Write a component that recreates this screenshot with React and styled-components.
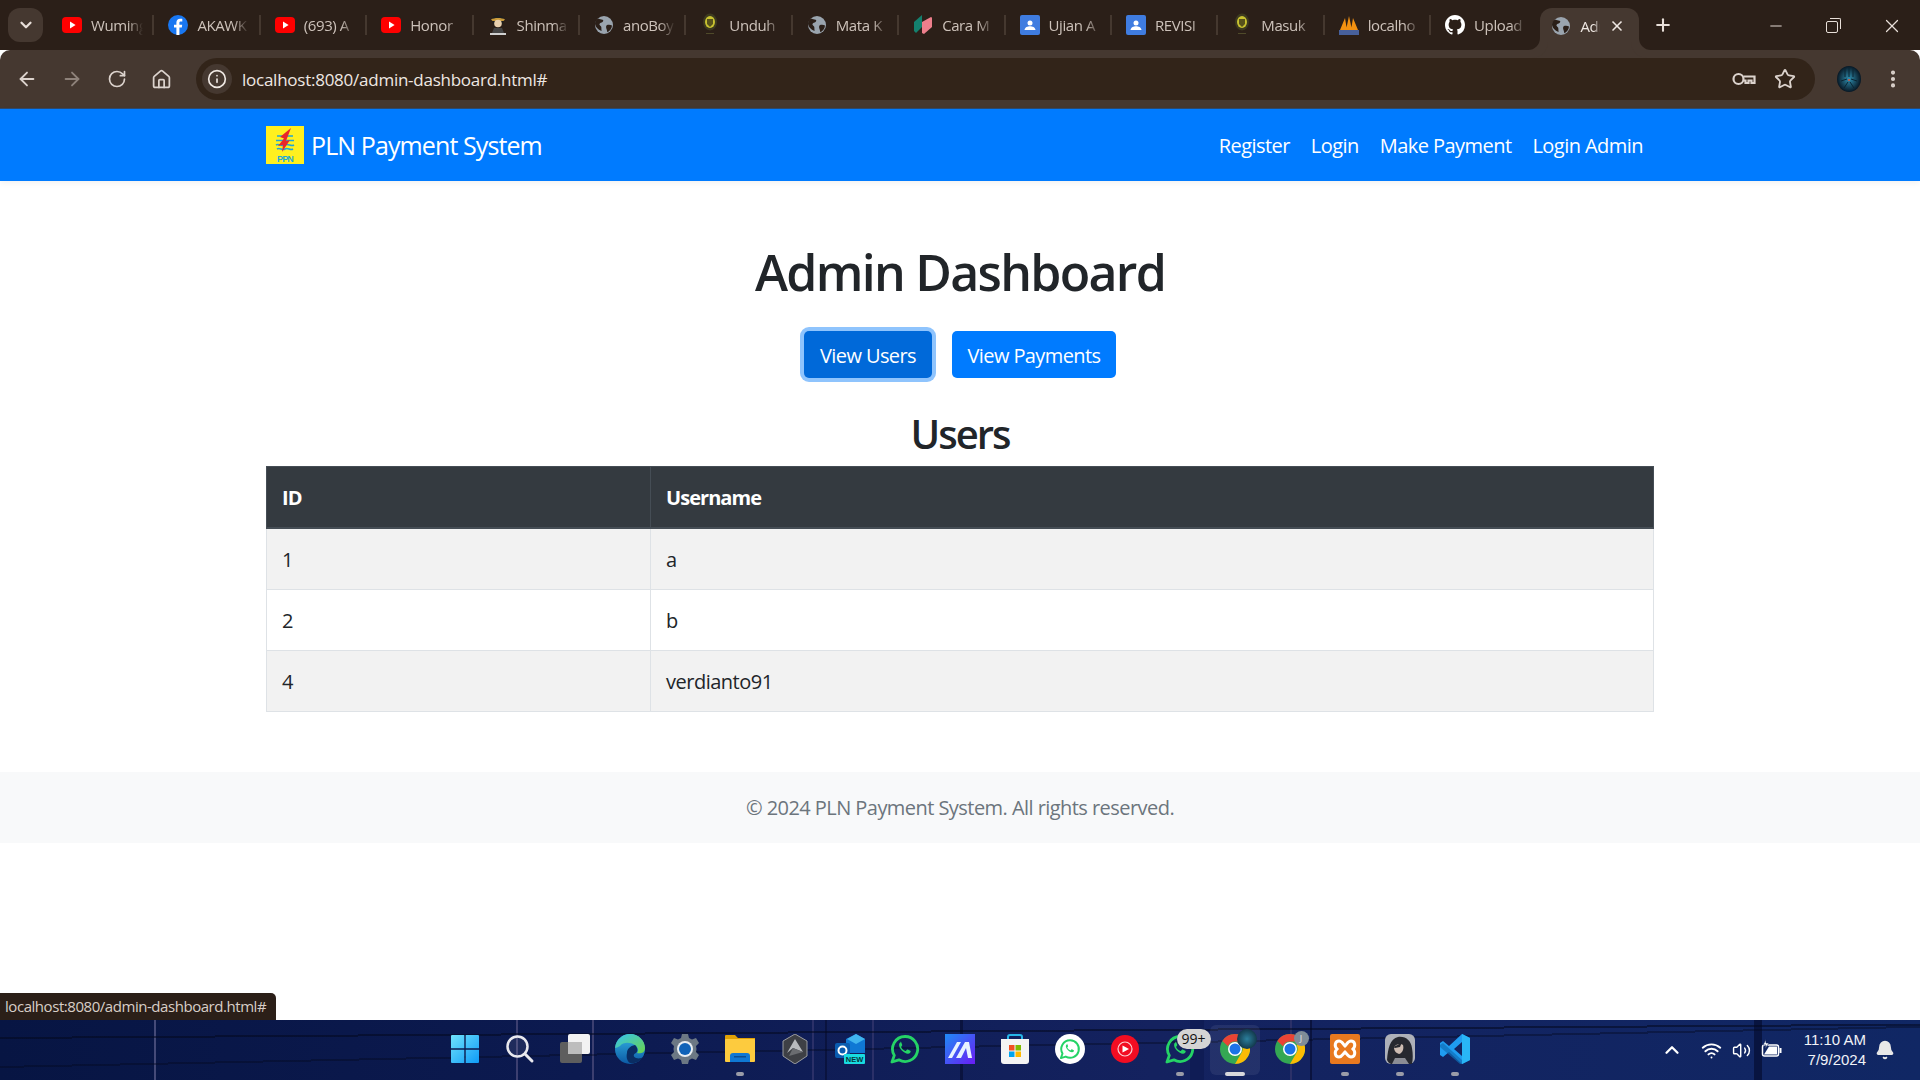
import React from "react";
import styled, { createGlobalStyle } from "styled-components";
import {
  ArrowLeft,
  ArrowRight,
  RotateCw,
  House,
  Info,
  Star,
  EllipsisVertical,
  ChevronDown,
  ChevronUp,
  X,
  Plus,
  Minus,
  Wifi,
  Volume2,
  Bell,
} from "lucide-react";

const GlobalStyle = createGlobalStyle`
  html, body {
    margin: 0;
    padding: 0;
    height: 100%;
    background: #fff;
    overflow: hidden;
  }
  * { box-sizing: border-box; }
`;

/* ---------- favicons ---------- */

const YouTubeIcon = () => (
  <svg width="20" height="20" viewBox="0 0 20 20">
    <rect y="2" width="20" height="16" rx="4" fill="#f00" />
    <path d="M8 6.6 13.6 10 8 13.4z" fill="#fff" />
  </svg>
);

const FacebookIcon = () => (
  <svg width="20" height="24" viewBox="0 0 20 24">
    <circle cx="10" cy="12" r="10" fill="#1877f2" />
    <path d="M8.4 22v-7.4H6v-2.9h2.4V9.6c0-2.5 1.5-3.8 3.7-3.8 1 0 1.9.1 2.2.1v2.6h-1.5c-1.2 0-1.4.6-1.4 1.4v1.8h2.8l-.4 2.9h-2.4V22z" fill="#fff" />
  </svg>
);

const GlobeIcon = () => (
  <svg width="20" height="20" viewBox="0 0 20 20">
    <circle cx="10" cy="10" r="9" fill="#9aa4ae" />
    <path d="M4 3.5c2 .5 3 1.200 4.500 1.200 1 0 1 1.500 0 2.300-1 .8-2.500.6-3 2-.4 1 1 1.600 1.600 2.600.5 1 .2 2.500.5 4.400-2.500-.8-6.600-4-6.600-7.500 0-2 1-3.600 3-5zM13 10c1.500-.5 3.500-.5 5 .5-.3 3-2 5.500-4.500 6.800-.7-1-.3-2-1-3.300-.6-1.400-.7-3.500.5-4z" fill="#2b1f18" />
  </svg>
);

const CharacterIcon = () => (
  <svg width="20" height="24" viewBox="0 0 20 24">
    <path d="M4 6c1-5 11-5 12 0l-1 5H5z" fill="#1e1e1e" />
    <path d="M3 6.500c3-2 11-2 14 0l-1.500 1.500h-11z" fill="#c99a3a" />
    <circle cx="10" cy="10.500" r="3.800" fill="#e8d0ae" />
    <path d="M6 15h8l2 5H4z" fill="#444" />
    <path d="M2 20h16v2H2z" fill="#cfcfcf" />
  </svg>
);

const EmblemIcon = () => (
  <svg width="18" height="24" viewBox="0 0 18 24">
    <ellipse cx="9" cy="9" rx="7" ry="8.500" fill="#3d3a20" />
    <ellipse cx="9" cy="9" rx="5" ry="6" fill="#c9c230" />
    <path d="M6 6h6v5l-3 3-3-3z" fill="#57521c" />
    <path d="M5 20h8v1H5z" fill="#4f4a2a" />
  </svg>
);

const CaraIcon = () => (
  <svg width="20" height="24" viewBox="0 0 20 24">
    <path d="M1 9 9 2v12l-6 6-2-2z" fill="#14806e" />
    <path d="M9 9l9-5c1 0 1 1 1 2v8l-8 7-2-1z" fill="#ee7f8c" />
  </svg>
);

const ClassroomIcon = () => (
  <svg width="20" height="20" viewBox="0 0 20 20">
    <rect width="20" height="20" rx="2" fill="#3f7ce0" />
    <circle cx="10" cy="8" r="2.500" fill="#fff" />
    <path d="M4.500 15c.5-3 3-3.800 5.500-3.800s5 .8 5.500 3.800z" fill="#fff" />
  </svg>
);

const PmaIcon = () => (
  <svg width="20" height="24" viewBox="0 0 20 24">
    <path d="M1 17 6 5l2 12zM7 17l3-14 3 14zM12 17l2-12 5 12z" fill="#f29111" />
    <rect x="0" y="17" width="20" height="5" fill="#47609c" />
  </svg>
);

const GithubIcon = () => (
  <svg width="20" height="20" viewBox="0 0 16 16">
    <path fill="#fff" d="M8 0C3.580 0 0 3.580 0 8c0 3.540 2.290 6.530 5.470 7.590.4.070.55-.17.55-.38 0-.19-.01-.82-.01-1.490-2.010.37-2.530-.49-2.690-.94-.09-.23-.48-.94-.82-1.130-.28-.15-.68-.52-.01-.53.63-.01 1.080.58 1.230.82.72 1.210 1.870.87 2.330.66.07-.52.28-.87.510-1.070-1.780-.2-3.640-.89-3.640-3.950 0-.87.31-1.590.82-2.150-.08-.2-.36-1.020.08-2.120 0 0 .67-.21 2.200.82.64-.18 1.320-.27 2-.27s1.360.09 2 .27c1.530-1.040 2.200-.82 2.200-.82.44 1.100.16 1.920.08 2.120.51.56.82 1.270.82 2.150 0 3.070-1.870 3.750-3.650 3.950.29.25.54.73.54 1.480 0 1.070-.01 1.930-.01 2.200 0 .21.15.46.55.38A8.010 8.010 0 0 0 16 8c0-4.420-3.580-8-8-8z" />
  </svg>
);

/* ---------- taskbar icons ---------- */

const WindowsIcon = () => (
  <svg width="30" height="30" viewBox="0 0 30 30">
    <defs>
      <linearGradient id="winGrad" x1="0" y1="0" x2="1" y2="1">
        <stop offset="0" stopColor="#6fe2fb" />
        <stop offset="1" stopColor="#0f9bf7" />
      </linearGradient>
    </defs>
    <path d="M1 2a1 1 0 0 1 1-1h12.300v13.300H1zM15.700 1H28a1 1 0 0 1 1 1v12.300H15.700zM1 15.700h13.300V29H2a1 1 0 0 1-1-1zM15.700 15.700H29V28a1 1 0 0 1-1 1H15.700z" fill="url(#winGrad)" />
  </svg>
);

const SearchIcon = () => (
  <svg width="30" height="30" viewBox="0 0 30 30">
    <circle cx="12.500" cy="12.500" r="10" fill="rgba(255,255,255,.08)" stroke="#e9e9ee" strokeWidth="2.500" />
    <path d="M20 20l7 7" stroke="#e9e9ee" strokeWidth="3" strokeLinecap="round" />
  </svg>
);

const TaskViewIcon = () => (
  <svg width="30" height="30" viewBox="0 0 30 30">
    <rect y="8" width="22" height="21" rx="2" fill="#5e5e5e" />
    <rect x="8" y="0" width="22" height="20" rx="2" fill="#f2f2f2" />
    <rect x="8" y="8" width="14" height="12" fill="#bdbdbd" />
  </svg>
);

const EdgeIcon = () => (
  <svg width="30" height="30" viewBox="0 0 30 30">
    <defs>
      <linearGradient id="edgeBlue" x1="0" y1="0" x2="0" y2="1">
        <stop offset="0" stopColor="#33b5e5" />
        <stop offset="1" stopColor="#0c59a4" />
      </linearGradient>
      <linearGradient id="edgeGreen" x1="0" y1="0" x2="1" y2="1">
        <stop offset="0" stopColor="#35c1f1" />
        <stop offset="1" stopColor="#6bd64a" />
      </linearGradient>
    </defs>
    <circle cx="15" cy="15" r="15" fill="url(#edgeBlue)" />
    <path d="M0 14C1 5 8 0 15 0c9 0 15 7 15 14 0 5-5 6-8 5 2-2 1-6-2-8-5-3-12-3-15 1-2 1-4 2-5 2z" fill="url(#edgeGreen)" />
    <path d="M12 19c0-4 3-7 8-8 3 3 3 6 1 8-3 1-3 4 0 5 3 1 6 0 7-1-3 5-9 7-13 6-3-2-4-6-3-10z" fill="#0a2d63" />
  </svg>
);

const SettingsIcon = () => (
  <svg width="30" height="30" viewBox="0 0 30 30">
    <path d="M12 0h6l1 4 3 1.500L26 4l3 5-3 3 .5 3-.5 3 3 3-3 5-4-1.500-3 1.500-1 4h-6l-1-4-3-1.500L4 26l-3-5 3-3-.5-3 .5-3-3-3 3-5 4 1.500L11 4z" fill="#6c7884" />
    <circle cx="15" cy="15" r="8" fill="#e8edf2" />
    <circle cx="15" cy="15" r="6" fill="#0f62b8" />
  </svg>
);

const FolderIcon = () => (
  <svg width="30" height="30" viewBox="0 0 30 30">
    <path d="M0 2a1 1 0 0 1 1-1h9l3 3h17v6H0z" fill="#e0a106" />
    <rect y="5" width="30" height="23" rx="1" fill="#fdcb3e" />
    <path d="M5 28v-6a3 3 0 0 1 3-3h14a3 3 0 0 1 3 3v6z" fill="#0f78d4" />
    <rect x="9" y="22" width="12" height="1.500" fill="#0b4e92" />
  </svg>
);

const HexIcon = () => (
  <svg width="30" height="30" viewBox="0 0 30 30">
    <path d="M15 0l12 7v15l-12 8-12-8V7z" fill="#3e4045" stroke="#9a9ca0" strokeWidth="1" />
    <path d="M15 5l8 13-10-4-6 5z" fill="#b9bbbe" />
    <path d="M13 14l10 4-14 4z" fill="#6a6c70" />
  </svg>
);

const OutlookIcon = () => (
  <svg width="30" height="30" viewBox="0 0 30 30">
    <path d="M11 5l10-5 9 5v14H11z" fill="#0f78d4" />
    <path d="M21 0l9 5-9 5-9-5z" fill="#40b4ee" />
    <rect y="9" width="15" height="15" rx="2" fill="#0a5cb0" />
    <circle cx="7.500" cy="16.500" r="4" fill="none" stroke="#fff" strokeWidth="2" />
    <rect x="9" y="20" width="21" height="10" rx="1" fill="#18dbe0" />
    <text x="19.500" y="28" fontSize="7.500" fontWeight="700" textAnchor="middle" fontFamily="Liberation Sans, sans-serif" fill="#06343c">NEW</text>
  </svg>
);

const WhatsappPath = "M15 2.500A12.500 12.500 0 0 0 4.300 21.400L2 28l6.900-2.200A12.500 12.500 0 1 0 15 2.500z";
const WhatsappHandset = "M10.600 8.500c-.5 0-1.300.6-1.500 2-.2 1.600.6 3.800 2.700 6 2.200 2.200 4.600 3.400 6.300 3.200 1.500-.2 2.500-1.200 2.600-2.200 0-.5-.1-.7-.4-.8l-2.500-1.200c-.4-.2-.6-.1-.9.200l-.9 1.100c-.2.200-.4.300-.8.100-1.700-.7-3.100-2-4-3.600-.2-.4 0-.6.200-.8l.7-.9c.2-.3.2-.5.100-.8l-1-2.500c-.2-.6-.4-.8-.6-.8z";

const WhatsappIcon = () => (
  <svg width="30" height="30" viewBox="0 0 30 30">
    <path d={WhatsappPath} fill="none" stroke="#25d366" strokeWidth="2.800" strokeLinejoin="round" />
    <path d={WhatsappHandset} fill="#25d366" />
  </svg>
);

const WhatsappWhiteIcon = () => (
  <svg width="30" height="30" viewBox="0 0 30 30">
    <circle cx="15" cy="15" r="15" fill="#fff" />
    <g transform="translate(4.500 4.500) scale(.7)">
      <path d={WhatsappPath} fill="none" stroke="#25d366" strokeWidth="2.800" strokeLinejoin="round" />
      <path d={WhatsappHandset} fill="#25d366" />
    </g>
  </svg>
);

const CopilotAppIcon = () => (
  <svg width="30" height="30" viewBox="0 0 30 30">
    <defs>
      <linearGradient id="appGrad" x1="0" y1="0" x2="1" y2="1">
        <stop offset="0" stopColor="#1f8bf5" />
        <stop offset="1" stopColor="#6a1cf5" />
      </linearGradient>
    </defs>
    <rect width="30" height="30" fill="url(#appGrad)" />
    <path d="M3 24 12 8h4L7 24zM11 24l9-16h4l3 16h-4l-2-10-5 10z" fill="#e8f2ff" />
  </svg>
);

const StoreIcon = () => (
  <svg width="30" height="30" viewBox="0 0 30 30">
    <path d="M8 6V3a2 2 0 0 1 2-2h10a2 2 0 0 1 2 2v3" fill="none" stroke="#27b6e8" strokeWidth="2" />
    <path d="M1 5h28v22a3 3 0 0 1-3 3H4a3 3 0 0 1-3-3z" fill="#f4f4f4" />
    <rect x="9" y="11" width="5.500" height="5.500" fill="#f25022" />
    <rect x="15.500" y="11" width="5.500" height="5.500" fill="#7fba00" />
    <rect x="9" y="17.500" width="5.500" height="5.500" fill="#00a4ef" />
    <rect x="15.500" y="17.500" width="5.500" height="5.500" fill="#ffb900" />
  </svg>
);

const MusicIcon = () => (
  <svg width="28" height="28" viewBox="0 0 28 28">
    <circle cx="14" cy="14" r="14" fill="#f20d22" />
    <circle cx="14" cy="14" r="7" fill="none" stroke="#fbd0d4" strokeWidth="1.200" />
    <path d="M11.500 10.500 18 14l-6.500 3.500z" fill="#fff" />
  </svg>
);

const ChromeIcon = () => (
  <svg width="30" height="30" viewBox="0 0 30 30">
    <circle cx="15" cy="15" r="15" fill="#34a853" />
    <path d="M15 0a15 15 0 0 1 13 7.500H15a7.500 7.500 0 0 0-7 4.800L2.300 7A15 15 0 0 1 15 0z" fill="#ea4335" />
    <path d="M28 7.500A15 15 0 0 1 15 30l6.500-11.200A7.500 7.500 0 0 0 21.500 11z" fill="#fbbc04" />
    <circle cx="15" cy="15" r="7" fill="#fff" />
    <circle cx="15" cy="15" r="5.500" fill="#1a73e8" />
  </svg>
);

const XamppIcon = () => (
  <svg width="30" height="30" viewBox="0 0 30 30">
    <rect width="30" height="30" rx="2" fill="#e8791f" />
    <path d="M9 7c3 0 4 3 6 5 2-2 3-5 6-5 4 0 5 5 2 8 3 3 2 8-2 8-3 0-4-3-6-5-2 2-3 5-6 5-4 0-5-5-2-8-3-3-2-8 2-8z" fill="none" stroke="#fff" strokeWidth="3" />
  </svg>
);

const GameIcon = () => (
  <svg width="30" height="30" viewBox="0 0 30 30">
    <rect width="30" height="30" rx="6" fill="#aeb1b9" />
    <path d="M2 26C3 14 5 5 13 3c8-1 13 4 14 11 1 6 1 11 0 16H6c-2-1-3-2-4-4z" fill="#26282f" />
    <path d="M9 13c2-3 7-4 9-2 1 3 0 8-4 9-3-1-5-3-5-7z" fill="#cdbcb2" />
    <path d="M8 13c3-1 6-3 9-5l-2 5-5 1z" fill="#26282f" />
    <path d="M10 24h10l4 6H7z" fill="#8b8d95" />
  </svg>
);

const VsCodeIcon = () => (
  <svg width="30" height="30" viewBox="0 0 30 30">
    <path d="M22 0l8 4v22l-8 4-13-12-6 5-3-2v-12l3-2 6 5zM22 8l-8 7 8 7z" fill="#1f9cf0" />
    <path d="M22 0l8 4v22l-8 4z" fill="#29b6f6" />
    <path d="M0 11l3-2 19 17v4l-2 0L0 13z" fill="#0f6fb8" opacity=".7" />
  </svg>
);

const LogoMark = () => (
  <svg width="38" height="38" viewBox="0 0 38 38">
    <rect width="38" height="38" fill="#fff01f" />
    <path d="M11 10h16M10 14.500h18" stroke="#21a5d8" strokeWidth="1.500" />
    <path d="M10 19c3-2 6 2 9 0s6 2 9 0M11 23c3-2 5 2 8 0s5 2 8 0" fill="none" stroke="#21a5d8" strokeWidth="1.600" />
    <path d="M25 2 14 11l4 1.500L12 20l5-1-1 7 8-12-4 1z" fill="#e8262a" />
    <text x="19" y="35.500" fontSize="9" fontWeight="700" textAnchor="middle" fontFamily="Liberation Sans, sans-serif" fill="#1fa9d6">PPN</text>
  </svg>
);

const KeyIcon = () => (
  <svg width="24" height="24" viewBox="0 0 24 24" fill="none" stroke="#dcd3cd" strokeWidth="2.200">
    <circle cx="6.500" cy="12" r="5" />
    <path d="M11.500 9.500h11v6.500h-3v-2.500h-3V16h-3v-2.500h-2" />
  </svg>
);

const AvatarMark = () => (
  <svg width="24" height="26" viewBox="0 0 24 26">
    <defs>
      <radialGradient id="avatarGrad">
        <stop offset="0" stopColor="#2f8fb0" />
        <stop offset="1" stopColor="#071724" />
      </radialGradient>
    </defs>
    <ellipse cx="12" cy="13" rx="12" ry="13" fill="url(#avatarGrad)" />
    <path d="M8 2v9M12 1v10M16 2v9M4 15l6-2M20 15l-6-2M7 22l4-6M17 22l-4-6" stroke="#0a2533" strokeWidth="1" />
    <circle cx="12" cy="14" r="1" fill="#e0553a" />
  </svg>
);

const BatteryIcon = () => (
  <svg width="22" height="22" viewBox="0 0 22 22">
    <rect x="1.500" y="6" width="16" height="11" rx="2" fill="none" stroke="#fff" strokeWidth="1.500" />
    <path d="M3 15.500 8 7.500h8v8z" fill="#fff" />
    <rect x="18.500" y="9" width="2" height="5" fill="#fff" />
    <path d="M5 .5 2 6h3l-1 4 4-6H5z" fill="#fff" stroke="#0d2157" strokeWidth=".6" />
  </svg>
);

/* ---------- browser chrome ---------- */

const Screen = styled.div`
  position: relative;
  display: flex;
  flex-direction: column;
  width: 1920px;
  height: 1080px;
  overflow: hidden;
  font-family: "Open Sans", "Liberation Sans", sans-serif;
`;

const TabStrip = styled.div`
  display: flex;
  align-items: flex-end;
  height: 50px;
  flex: none;
  padding-left: 8px;
  background: #2b1f18;
`;

const TabMenuButton = styled.div`
  display: flex;
  align-items: center;
  justify-content: center;
  width: 35px;
  height: 34px;
  margin: 0 5px 8px 0;
  border-radius: 12px;
  color: #e8dfd9;
  background: #453830;
`;

const Tab = styled.div`
  display: flex;
  align-items: center;
  flex: none;
  gap: 9px;
  width: 106.4px;
  height: 42px;
  padding: 0 0 8px 14px;
  position: relative;
  &::after {
    content: "";
    position: absolute;
    right: 0;
    top: 7px;
    width: 2px;
    height: 20px;
    background: ${(p) => (p.$last ? "transparent" : "#45382f")};
  }
`;

const ActiveTab = styled.div`
  display: flex;
  align-items: center;
  flex: none;
  gap: 9px;
  position: relative;
  width: 99px;
  height: 42px;
  margin-left: 3px;
  padding: 0 0 6px 11px;
  border-radius: 12px 12px 0 0;
  background: #453830;
  color: #efe8e3;
  &::before, &::after {
    content: "";
    position: absolute;
    bottom: 0;
    width: 12px;
    height: 12px;
    background: transparent;
  }
  &::before {
    left: -12px;
    border-bottom-right-radius: 12px;
    box-shadow: 4px 4px 0 4px #453830;
  }
  &::after {
    right: -12px;
    border-bottom-left-radius: 12px;
    box-shadow: -4px 4px 0 4px #453830;
  }
`;

const TabIcon = styled.span`
  display: flex;
  align-items: center;
  justify-content: center;
  flex: none;
  width: 20px;
  height: 24px;
`;

const TabTitle = styled.span`
  flex: none;
  width: ${(p) => p.$width || 52}px;
  overflow: hidden;
  white-space: nowrap;
  font-size: 15px;
  letter-spacing: -0.4px;
  color: ${(p) => (p.$active ? "#efe8e3" : "#cdc2ba")};
  mask-image: linear-gradient(90deg, #000 70%, transparent);
`;

const TabClose = styled.span`
  display: flex;
  flex: none;
  color: #efe8e3;
`;

const NewTabButton = styled.span`
  display: flex;
  align-items: center;
  flex: none;
  height: 42px;
  margin-left: 14px;
  padding-bottom: 8px;
  color: #e8dfd9;
`;

const WindowControls = styled.div`
  display: flex;
  align-items: center;
  margin-left: auto;
  height: 42px;
  padding-bottom: 6px;
  color: #e8dfd9;
`;

const WindowButton = styled.span`
  display: flex;
  justify-content: center;
  width: 56px;
  margin-left: ${(p) => p.$gap || 0}px;
`;

const RestoreGlyph = styled.span`
  position: relative;
  display: block;
  width: 12px;
  height: 12px;
  margin-top: 1px;
  border: 1.300px solid #e8dfd9;
  border-radius: 2px;
  &::after {
    content: "";
    position: absolute;
    top: -4px;
    right: -4px;
    width: 10px;
    height: 10px;
    border-top: 1.300px solid #e8dfd9;
    border-right: 1.300px solid #e8dfd9;
    border-top-right-radius: 2px;
  }
`;

const Toolbar = styled.div`
  display: flex;
  align-items: center;
  flex: none;
  height: 59px;
  padding: 0 5px 0 4px;
  background: #453830;
  border-radius: 10px 10px 0 0;
  border-bottom: 1px solid #2d4a70;
`;

const NavIcon = styled.span`
  display: flex;
  justify-content: center;
  flex: none;
  width: 45px;
  color: ${(p) => (p.$dim ? "#8e827a" : "#dcd3cd")};
`;

const Omnibox = styled.div`
  display: flex;
  align-items: center;
  flex: 1;
  height: 42px;
  margin-left: 12px;
  padding: 0 19px 0 6px;
  border-radius: 21px;
  background: #322419;
`;

const SiteInfo = styled.span`
  display: flex;
  align-items: center;
  justify-content: center;
  flex: none;
  width: 30px;
  height: 30px;
  border-radius: 50%;
  background: #453830;
  color: #efe8e3;
`;

const UrlText = styled.span`
  margin-left: 10px;
  font-size: 17px;
  letter-spacing: -0.25px;
  color: #efe8e3;
`;

const OmniActions = styled.span`
  display: flex;
  align-items: center;
  gap: 18px;
  margin-left: auto;
  color: #dcd3cd;
`;

const ProfileSlot = styled.span`
  display: flex;
  justify-content: center;
  flex: none;
  width: 55px;
  padding-left: 12px;
`;

/* ---------- the page ---------- */

const Page = styled.div`
  position: relative;
  flex: 1;
  min-height: 0;
  background: #fff;
  color: #212529;
`;

const Navbar = styled.nav`
  display: flex;
  align-items: center;
  height: 72px;
  padding: 0 266px;
  background: #007bff;
  box-shadow: 0 2px 6px rgba(0, 0, 0, 0.06);
`;

const Brand = styled.a`
  display: flex;
  align-items: center;
  gap: 7px;
  font-size: 25px;
  letter-spacing: -0.9px;
  color: #fff;
`;

const NavLinks = styled.div`
  display: flex;
  gap: 21px;
  margin-left: auto;
  padding-right: 11px;
`;

const NavLink = styled.a`
  font-size: 20px;
  letter-spacing: -0.55px;
  color: #fff;
`;

const Main = styled.main`
  padding: 61px 266px 0;
  text-align: center;
`;

const Heading = styled.h1`
  margin: 0 0 29px;
  font-size: 50px;
  font-weight: 600;
  line-height: 60px;
  letter-spacing: -1.7px;
`;

const ButtonRow = styled.div`
  display: flex;
  justify-content: center;
  gap: 20px;
`;

const ActionButton = styled.button`
  width: ${(p) => p.$width}px;
  height: 47px;
  padding: 1px 0 0;
  border: 0;
  border-radius: 5px;
  font-family: inherit;
  font-size: 20px;
  letter-spacing: -0.6px;
  color: #fff;
  background: ${(p) => (p.$focused ? "#0069d9" : "#007bff")};
  box-shadow: ${(p) => (p.$focused ? "0 0 0 4px #8fc4fd" : "none")};
`;

const SectionTitle = styled.h2`
  margin: 32px 0 8px;
  font-size: 40px;
  font-weight: 600;
  line-height: 48px;
  letter-spacing: -2px;
`;

const UsersTable = styled.table`
  width: 100%;
  border-collapse: collapse;
  table-layout: fixed;
  text-align: left;
  font-size: 20px;
  line-height: 30px;
  letter-spacing: -0.5px;
`;

const HeadCell = styled.th`
  width: ${(p) => p.$width || "auto"};
  padding: 16px 15px 14px;
  font-weight: 700;
  letter-spacing: -0.95px;
  color: #fff;
  background: #343a40;
  border: 1px solid #454d55;
  border-bottom-width: 2px;
`;

const Row = styled.tr`
  background: ${(p) => (p.$striped ? "#f2f2f2" : "#fff")};
`;

const Cell = styled.td`
  padding: 16px 15px 14px;
  border: 1px solid #dee2e6;
`;

const Footer = styled.footer`
  margin-top: 60px;
  height: 71px;
  line-height: 71px;
  text-align: center;
  font-size: 20px;
  letter-spacing: -0.55px;
  color: #6c757d;
  background: #f8f9fa;
`;

const StatusBubble = styled.div`
  position: absolute;
  left: 0;
  bottom: 0;
  height: 27px;
  padding: 0 10px 0 5px;
  line-height: 27px;
  font-size: 15px;
  letter-spacing: -0.45px;
  color: #d8cec7;
  background: #2b1f18;
  border-top-right-radius: 5px;
`;

/* ---------- taskbar ---------- */

const verticalLine = (x, width, colour) =>
  `linear-gradient(90deg, transparent ${x}px, ${colour} ${x}px, ${colour} ${x + width}px, transparent ${x + width}px)`;

const Taskbar = styled.div`
  display: grid;
  grid-template-columns: 1fr auto 1fr;
  align-items: center;
  flex: none;
  height: 60px;
  background:
    linear-gradient(179.600deg, transparent 17px, rgba(3, 8, 30, 0.55) 17px, rgba(3, 8, 30, 0.55) 19px, transparent 19px),
    linear-gradient(178.800deg, transparent 46px, rgba(3, 8, 30, 0.4) 46px, rgba(3, 8, 30, 0.4) 48px, transparent 48px),
    ${verticalLine(154, 2, "#454a78")},
    ${verticalLine(516, 2, "#3c3f70")},
    ${verticalLine(592, 2, "#3c3f70")},
    ${verticalLine(812, 2, "#2b3068")},
    ${verticalLine(825, 2, "#0a133f")},
    ${verticalLine(872, 2, "#2b3068")},
    ${verticalLine(960, 3, "#0a133f")},
    ${verticalLine(1190, 14, "#0f1c55")},
    ${verticalLine(1290, 2, "#2b3068")},
    ${verticalLine(1310, 2, "#0a133f")},
    ${verticalLine(1754, 8, "#081440")},
    linear-gradient(90deg, #071543 0%, #0c1a50 30%, #14225f 60%, #102764 100%);
`;

const TaskIcons = styled.div`
  grid-column: 2;
  display: flex;
`;

const TaskCell = styled.div`
  position: relative;
  display: flex;
  align-items: center;
  justify-content: center;
  width: 55px;
  height: 60px;
  padding-bottom: 2px;
  &::before {
    content: "";
    display: ${(p) => (p.$pill === "active" ? "block" : "none")};
    position: absolute;
    top: 5px;
    left: 2.500px;
    width: 50px;
    height: 50px;
    border-radius: 6px;
    background: rgba(255, 255, 255, 0.07);
  }
  &::after {
    content: "";
    display: ${(p) => (p.$pill ? "block" : "none")};
    position: absolute;
    bottom: 4px;
    left: 50%;
    transform: translateX(-50%);
    width: ${(p) => (p.$pill === "active" ? 20 : 8)}px;
    height: 4px;
    border-radius: 2px;
    background: ${(p) => (p.$pill === "active" ? "#d8d8dc" : "#9a9ca8")};
  }
  svg { position: relative; }
`;

const CountBadge = styled.span`
  position: absolute;
  top: 9px;
  left: 24px;
  width: 34px;
  height: 20px;
  border-radius: 10px;
  text-align: center;
  line-height: 20px;
  font-size: 14px;
  color: #111;
  background: #d4d4d4;
`;

const ProfileOverlay = styled.span`
  position: absolute;
  top: 9px;
  left: 29px;
  width: 20px;
  height: 20px;
  border-radius: 50%;
  background: radial-gradient(circle, #2b7f9c, #081b2a);
`;

const ProfileInitial = styled.span`
  position: absolute;
  top: 11px;
  left: 31px;
  width: 15px;
  height: 15px;
  border-radius: 50%;
  text-align: center;
  line-height: 15px;
  font-size: 9px;
  color: #e8e8e8;
  background: #7f8c99;
`;

const Tray = styled.div`
  grid-column: 3;
  justify-self: end;
  display: flex;
  align-items: center;
  color: #fff;
  padding-right: 25px;
`;

const TrayIcon = styled.span`
  display: flex;
  justify-content: center;
  width: ${(p) => p.$width}px;
`;

const Clock = styled.div`
  width: 72px;
  margin: 0 9px 0 2px;
  text-align: right;
  font-family: "Liberation Sans", sans-serif;
  font-size: 15px;
  line-height: 20px;
  color: #f0f2f7;
`;

const tabs = [
  { icon: <YouTubeIcon />, title: "Wuming" },
  { icon: <FacebookIcon />, title: "AKAWK" },
  { icon: <YouTubeIcon />, title: "(693) A" },
  { icon: <YouTubeIcon />, title: "Honor" },
  { icon: <CharacterIcon />, title: "Shinma" },
  { icon: <GlobeIcon />, title: "anoBoy" },
  { icon: <EmblemIcon />, title: "Unduh" },
  { icon: <GlobeIcon />, title: "Mata K" },
  { icon: <CaraIcon />, title: "Cara M" },
  { icon: <ClassroomIcon />, title: "Ujian A" },
  { icon: <ClassroomIcon />, title: "REVISI" },
  { icon: <EmblemIcon />, title: "Masuk" },
  { icon: <PmaIcon />, title: "localho" },
  { icon: <GithubIcon />, title: "Upload", last: true },
];

const users = [
  { id: 1, username: "a" },
  { id: 2, username: "b" },
  { id: 4, username: "verdianto91" },
];

const App = () => {
  return (
    <Screen>
      <GlobalStyle />
      <TabStrip>
        <TabMenuButton>
          <ChevronDown size={18} strokeWidth={3} />
        </TabMenuButton>
        {tabs.map((tab) => (
          <Tab key={tab.title} $last={tab.last}>
            <TabIcon>{tab.icon}</TabIcon>
            <TabTitle>{tab.title}</TabTitle>
          </Tab>
        ))}
        <ActiveTab>
          <TabIcon>
            <GlobeIcon />
          </TabIcon>
          <TabTitle $active $width={20}>Admin</TabTitle>
          <TabClose>
            <X size={16} strokeWidth={2.5} />
          </TabClose>
        </ActiveTab>
        <NewTabButton>
          <Plus size={20} strokeWidth={2.5} />
        </NewTabButton>
        <WindowControls>
          <WindowButton>
            <Minus size={18} strokeWidth={1.3} />
          </WindowButton>
          <WindowButton>
            <RestoreGlyph />
          </WindowButton>
          <WindowButton $gap={4}>
            <X size={22} strokeWidth={1.3} />
          </WindowButton>
        </WindowControls>
      </TabStrip>

      <Toolbar>
        <NavIcon><ArrowLeft size={22} /></NavIcon>
        <NavIcon $dim><ArrowRight size={22} /></NavIcon>
        <NavIcon><RotateCw size={20} /></NavIcon>
        <NavIcon><House size={21} /></NavIcon>
        <Omnibox>
          <SiteInfo>
            <Info size={20} />
          </SiteInfo>
          <UrlText>localhost:8080/admin-dashboard.html#</UrlText>
          <OmniActions>
            <KeyIcon />
            <Star size={22} />
          </OmniActions>
        </Omnibox>
        <ProfileSlot>
          <AvatarMark />
        </ProfileSlot>
        <NavIcon><EllipsisVertical size={22} strokeWidth={2.5} /></NavIcon>
      </Toolbar>

      <Page>
        <Navbar>
          <Brand>
            <LogoMark />
            PLN Payment System
          </Brand>
          <NavLinks>
            <NavLink>Register</NavLink>
            <NavLink>Login</NavLink>
            <NavLink>Make Payment</NavLink>
            <NavLink>Login Admin</NavLink>
          </NavLinks>
        </Navbar>

        <Main>
          <Heading>Admin Dashboard</Heading>
          <ButtonRow>
            <ActionButton $focused $width={128}>View Users</ActionButton>
            <ActionButton $width={164}>View Payments</ActionButton>
          </ButtonRow>
          <SectionTitle>Users</SectionTitle>
          <UsersTable>
            <thead>
              <tr>
                <HeadCell $width="384px">ID</HeadCell>
                <HeadCell>Username</HeadCell>
              </tr>
            </thead>
            <tbody>
              {users.map((user, i) => (
                <Row key={user.id} $striped={i % 2 === 0}>
                  <Cell>{user.id}</Cell>
                  <Cell>{user.username}</Cell>
                </Row>
              ))}
            </tbody>
          </UsersTable>
        </Main>

        <Footer>© 2024 PLN Payment System. All rights reserved.</Footer>
        <StatusBubble>localhost:8080/admin-dashboard.html#</StatusBubble>
      </Page>

      <Taskbar>
        <TaskIcons>
          <TaskCell><WindowsIcon /></TaskCell>
          <TaskCell><SearchIcon /></TaskCell>
          <TaskCell><TaskViewIcon /></TaskCell>
          <TaskCell><EdgeIcon /></TaskCell>
          <TaskCell><SettingsIcon /></TaskCell>
          <TaskCell $pill="small"><FolderIcon /></TaskCell>
          <TaskCell><HexIcon /></TaskCell>
          <TaskCell><OutlookIcon /></TaskCell>
          <TaskCell><WhatsappIcon /></TaskCell>
          <TaskCell><CopilotAppIcon /></TaskCell>
          <TaskCell><StoreIcon /></TaskCell>
          <TaskCell><WhatsappWhiteIcon /></TaskCell>
          <TaskCell><MusicIcon /></TaskCell>
          <TaskCell $pill="small">
            <WhatsappIcon />
            <CountBadge>99+</CountBadge>
          </TaskCell>
          <TaskCell $pill="active">
            <ChromeIcon />
            <ProfileOverlay />
          </TaskCell>
          <TaskCell>
            <ChromeIcon />
            <ProfileInitial>J</ProfileInitial>
          </TaskCell>
          <TaskCell $pill="small"><XamppIcon /></TaskCell>
          <TaskCell $pill="small"><GameIcon /></TaskCell>
          <TaskCell $pill="small"><VsCodeIcon /></TaskCell>
        </TaskIcons>
        <Tray>
          <TrayIcon $width={40}><ChevronUp size={22} strokeWidth={2.5} /></TrayIcon>
          <TrayIcon $width={38}><Wifi size={21} strokeWidth={2.2} /></TrayIcon>
          <TrayIcon $width={22}><Volume2 size={19} strokeWidth={1.8} /></TrayIcon>
          <TrayIcon $width={40}><BatteryIcon /></TrayIcon>
          <Clock>
            <div>11:10 AM</div>
            <div>7/9/2024</div>
          </Clock>
          <Bell size={20} fill="#e8e8e8" color="#e8e8e8" />
        </Tray>
      </Taskbar>
    </Screen>
  );
};

export default App;
